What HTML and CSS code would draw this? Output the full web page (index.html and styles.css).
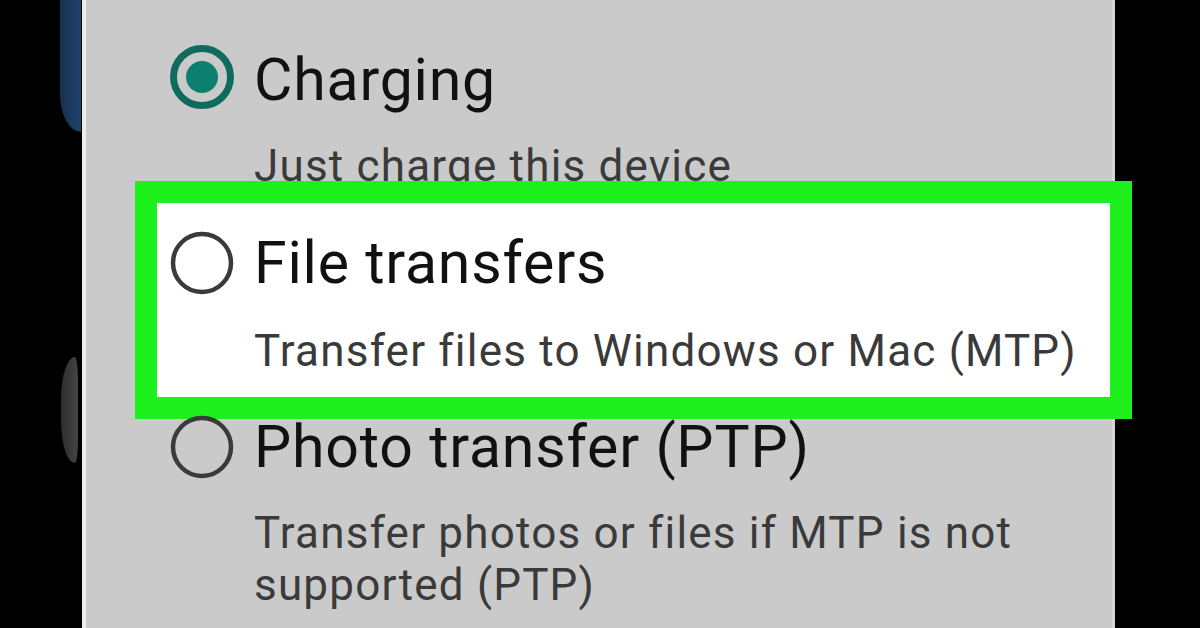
FILE: index.html
```html
<!DOCTYPE html>
<html lang="en">
<head>
<meta charset="utf-8">
<title>USB options</title>
<link rel="stylesheet" href="styles.css">
</head>
<body>
<div class="screen">
  <div class="gutter">
    <div class="gutter-blue"></div>
    <div class="gutter-knob"></div>
  </div>
  <div class="panel">
    <div class="option">
      <div class="option-head">
        <svg class="radio radio-on" viewBox="0 0 64 64" width="64" height="64" aria-hidden="true">
          <circle cx="32" cy="32" r="28.5" fill="none" stroke="#0f6b5e" stroke-width="7"/>
          <circle cx="32" cy="32" r="16" fill="#0d7f6e"/>
        </svg>
        <div class="option-title">Charging</div>
      </div>
      <div class="option-sub">Just charge this device</div>
    </div>
    <div class="option option-highlight">
      <div class="option-head">
        <svg class="radio" viewBox="0 0 64 64" width="64" height="64" aria-hidden="true">
          <circle cx="32" cy="32" r="29" fill="none" stroke="#3a3a3a" stroke-width="4.5"/>
        </svg>
        <div class="option-title">File transfers</div>
      </div>
      <div class="option-sub">Transfer files to Windows or Mac (MTP)</div>
    </div>
    <div class="option">
      <div class="option-head">
        <svg class="radio" viewBox="0 0 64 64" width="64" height="64" aria-hidden="true">
          <circle cx="32" cy="32" r="29" fill="none" stroke="#3a3a3a" stroke-width="4.5"/>
        </svg>
        <div class="option-title">Photo transfer (PTP)</div>
      </div>
      <div class="option-sub">Transfer photos or files if MTP is not supported (PTP)</div>
    </div>
  </div>
</div>
</body>
</html>
```

FILE: styles.css
```css
html, body {
  margin: 0;
  padding: 0;
  background: #000;
}

body {
  width: 1200px;
  height: 628px;
  overflow: hidden;
  font-family: Roboto, "Noto Sans", "Liberation Sans", sans-serif;
}

.screen {
  display: flex;
  width: 1200px;
  height: 628px;
}

.gutter {
  width: 82px;
  flex: none;
  display: flex;
  flex-direction: column;
  align-items: flex-end;
}

.gutter-blue {
  width: 21px;
  height: 132px;
  margin-right: 1px;
  background: linear-gradient(90deg, #15304f, #1f426b);
  border-bottom-left-radius: 22px 40px;
}

.gutter-knob {
  margin-top: 225px;
  margin-right: 4px;
  width: 17px;
  height: 106px;
  background: linear-gradient(90deg, #2e2e2e, #444);
  border-radius: 17px 4px 4px 17px / 53px 30px 30px 53px;
}

.panel {
  box-sizing: border-box;
  width: 1033px;
  flex: none;
  background: #cacaca;
  border-left: 4px solid #ececec;
  border-right: 3px solid #d6d6d6;
  padding: 45px 0 0 84px;
  display: flex;
  flex-direction: column;
}

.option-head {
  display: flex;
  align-items: center;
  gap: 20px;
  height: 70px;
}

.radio {
  flex: none;
  display: block;
}

.radio-on {
  margin-bottom: 6px;
}

.option-title {
  font-size: 59px;
  line-height: 70px;
  letter-spacing: 0.8px;
  color: #111;
  white-space: nowrap;
}

.option-sub {
  margin-top: 25px;
  padding-left: 84px;
  font-size: 44px;
  line-height: 52px;
  letter-spacing: 1.2px;
  color: #3a3a3a;
}

.option-highlight {
  margin: 11px 2px 15px -13px;
  padding: 25px 0 20px 13px;
  background: #fff;
  outline: 22px solid #1ef01e;
}

.option-highlight .option-sub {
  margin-top: 27px;
}
```
